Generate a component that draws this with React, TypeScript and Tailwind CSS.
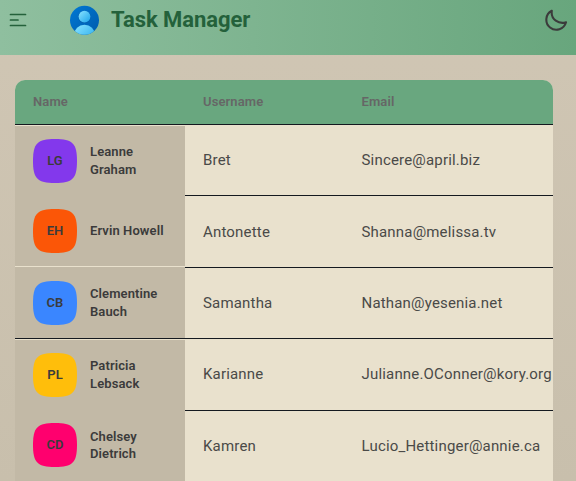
import React from "react";

type User = {
  name: string[];
  initials: string;
  color: string;
  username: string;
  email: string;
  height: string;
  nameCell: string;
  avatarTop: string;
  textTop: string;
  labelTop: string;
};

const users: User[] = [
  { name: ["Leanne", "Graham"], initials: "LG", color: "text-[#8338ec]", username: "Bret", email: "Sincere@april.biz", height: "h-[71px]", nameCell: "mt-px h-[70px]", avatarTop: "mt-[13px]", textTop: "pt-[25px]", labelTop: "mt-[17px]" },
  { name: ["Ervin Howell"], initials: "EH", color: "text-[#fb5607]", username: "Antonette", email: "Shanna@melissa.tv", height: "h-[72px]", nameCell: "h-[70px]", avatarTop: "mt-[13px]", textTop: "pt-[26px]", labelTop: "mt-[26px]" },
  { name: ["Clementine", "Bauch"], initials: "CB", color: "text-[#3a86ff]", username: "Samantha", email: "Nathan@yesenia.net", height: "h-[71px]", nameCell: "-mt-px h-[72px]", avatarTop: "mt-[14px]", textTop: "pt-[25px]", labelTop: "mt-[18px]" },
  { name: ["Patricia", "Lebsack"], initials: "PL", color: "text-[#ffbe0b]", username: "Karianne", email: "Julianne.OConner@kory.org", height: "h-[72px]", nameCell: "mt-px h-[71px]", avatarTop: "mt-[13px]", textTop: "pt-[25px]", labelTop: "mt-[17px]" },
  { name: ["Chelsey", "Dietrich"], initials: "CD", color: "text-[#ff006e]", username: "Kamren", email: "Lucio_Hettinger@annie.ca", height: "h-[71px]", nameCell: "h-[71px]", avatarTop: "mt-[12px]", textTop: "pt-[25px]", labelTop: "mt-[17px]" },
];

function Avatar({ user }: { user: User }) {
  return (
    <div className={`grid size-11 shrink-0 place-items-center ${user.color} ${user.avatarTop}`}>
      <svg className="col-start-1 row-start-1 size-11" viewBox="0 0 44 44" fill="currentColor">
        <path d="M0 22C0 4.4 4.4 0 22 0S44 4.4 44 22 39.6 44 22 44 0 39.6 0 22Z" />
      </svg>
      <span className="col-start-1 row-start-1 text-[13px] leading-[18px] font-semibold tracking-[0.1px] text-[#3b3b3b]">{user.initials}</span>
    </div>
  );
}

function Row({ user, last }: { user: User; last: boolean }) {
  const rule = last ? "" : "border-b border-[#14191f]";
  // The rule under the third row runs across the name column as well.
  const nameRule = user.initials === "CB" ? "border-b border-[#14191f]" : "";
  return (
    <div className={`flex ${user.height}`}>
      <div className="w-[170px] shrink-0">
        <div className={`flex items-start bg-[#c2b9a6] pl-[18px] ${user.nameCell} ${nameRule}`}>
          <Avatar user={user} />
          <div className={`ml-[13px] text-[13px] leading-[18px] font-semibold tracking-[0.1px] text-[#3b3b3b] ${user.labelTop}`}>
            {user.name.map((part) => (
              <div key={part} className={part === "Dietrich" ? "-mt-px whitespace-nowrap" : "whitespace-nowrap"}>{part}</div>
            ))}
          </div>
        </div>
      </div>
      <div className={`w-[159px] shrink-0 pl-[18px] ${user.textTop} ${rule}`}>{user.username}</div>
      <div className={`w-[209px] shrink-0 pl-[17.5px] whitespace-nowrap ${user.textTop} ${rule}`}>{user.email}</div>
    </div>
  );
}

export default function App() {
  return (
    <div className="h-[481px] w-[576px] overflow-hidden bg-linear-to-b from-[#d0c6b4] to-[#c8bfac] font-['Roboto',sans-serif]">
      <header className="flex h-[55px] items-start bg-linear-to-r from-[#8fbf9f] to-[#68a67d]">
        <svg className="mt-[13px] ml-[9px] h-4 w-[18px] shrink-0" viewBox="0 0 18 16" fill="none" stroke="#24613b" strokeWidth="1.7" strokeLinecap="round">
          <path d="M1.5 1.5H16.5M1.5 7H9M1.5 12.5H16.5" />
        </svg>
        <svg className="mt-[5px] ml-[43px] h-[30px] w-[29px] shrink-0" viewBox="0 0 29 30">
          <defs>
            <linearGradient id="disc" x1="0" y1="0" x2="1" y2="1">
              <stop offset="0" stopColor="#0078d4" />
              <stop offset="1" stopColor="#005bac" />
            </linearGradient>
            <linearGradient id="person" x1="0" y1="0" x2="1" y2="1">
              <stop offset="0" stopColor="#8be4ff" />
              <stop offset="1" stopColor="#1ba4eb" />
            </linearGradient>
            <clipPath id="round"><circle cx="14.5" cy="15.2" r="14.5" /></clipPath>
          </defs>
          <circle cx="14.5" cy="15.2" r="14.5" fill="url(#disc)" />
          <g clipPath="url(#round)">
            <ellipse cx="14.5" cy="30" rx="10.5" ry="10.2" fill="url(#person)" />
          </g>
          <circle cx="14.5" cy="12" r="6.3" fill="#0560b0" />
          <circle cx="14.5" cy="11.6" r="5.9" fill="url(#person)" />
        </svg>
        <h1 className="mt-[5px] ml-[12px] text-[22px] leading-[30px] font-bold tracking-[-0.05px] text-[#24613b]">Task Manager</h1>
        <svg className="mt-[8px] mr-[8px] ml-auto size-6 shrink-0" viewBox="0 0 24 24" fill="none" stroke="#3b3b3b" strokeWidth="2.1" strokeLinecap="round" strokeLinejoin="round">
          <path d="M7.8 2.8A10 10 0 1 0 22 14.3C15 16.5 6.5 11.5 7.8 2.8Z" />
        </svg>
      </header>
      <main className="mt-[25px] ml-[15px] h-[401px] w-[538px] overflow-hidden rounded-t-[10px] bg-[#e9e1cd] text-[15px] leading-[20px] font-normal tracking-[0.18px] text-[#4a4a48]">
        <div className="flex h-[45px] border-b border-[#14191f] bg-[#69a77f] pt-[13px] text-[13px] leading-[18px] font-semibold tracking-[0.1px] text-[#666666]">
          <div className="w-[170px] pl-[18px]">Name</div>
          <div className="w-[159px] pl-[18px]">Username</div>
          <div className="pl-[17.5px]">Email</div>
        </div>
        {users.map((user, index) => (
          <Row key={user.initials} user={user} last={index === users.length - 1} />
        ))}
      </main>
    </div>
  );
}
